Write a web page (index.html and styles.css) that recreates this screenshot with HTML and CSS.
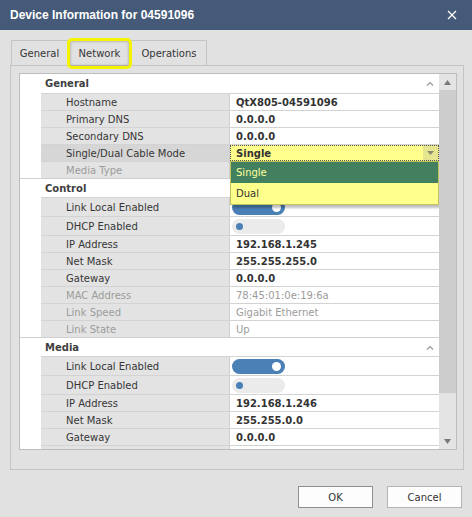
FILE: index.html
```html
<!DOCTYPE html>
<html lang="en">
<head>
  <meta charset="UTF-8">
  <title>Device Information for 04591096</title>
  <link rel="stylesheet" href="styles.css">
</head>
<body>
  <div class="titlebar">
    <span class="title">Device Information for 04591096</span>
    <svg class="close" width="10" height="10" viewBox="0 0 10 10"><path d="M1 1L9 9M9 1L1 9" stroke="#fff" stroke-width="1.3"/></svg>
  </div>

  <div class="tabs">
    <div class="tab tab-general">General</div>
    <div class="tab tab-network active">Network</div>
    <div class="tab tab-ops">Operations</div>
  </div>

  <div class="panel">
    <div class="grid">
      <div class="rows">
        <div class="group-head first">General
          <svg class="chev" width="8" height="5" viewBox="0 0 8 5"><path d="M1 4.5L4 1.5L7 4.5" fill="none" stroke="#999" stroke-width="1.2"/></svg>
        </div>
        <div class="row"><div class="label">Hostname</div><div class="value strong">QtX805-04591096</div></div>
        <div class="row"><div class="label">Primary DNS</div><div class="value strong">0.0.0.0</div></div>
        <div class="row"><div class="label">Secondary DNS</div><div class="value strong">0.0.0.0</div></div>
        <div class="row focused">
          <div class="label">Single/Dual Cable Mode</div>
          <div class="value combo">
            <span class="combo-text">Single</span>
            <span class="combo-btn"><svg width="7" height="4" viewBox="0 0 7 4"><path d="M0 0H7L3.5 4Z" fill="#8a8a70"/></svg></span>
            <div class="popup">
              <div class="item selected">Single</div>
              <div class="item">Dual</div>
            </div>
          </div>
        </div>
        <div class="row disabled"><div class="label">Media Type</div><div class="value"></div></div>

        <div class="group-head">Control</div>
        <div class="row tall"><div class="label">Link Local Enabled</div><div class="value"><span class="toggle on"></span></div></div>
        <div class="row tall"><div class="label">DHCP Enabled</div><div class="value"><span class="toggle"></span></div></div>
        <div class="row"><div class="label">IP Address</div><div class="value strong">192.168.1.245</div></div>
        <div class="row"><div class="label">Net Mask</div><div class="value strong">255.255.255.0</div></div>
        <div class="row"><div class="label">Gateway</div><div class="value strong">0.0.0.0</div></div>
        <div class="row disabled"><div class="label">MAC Address</div><div class="value">78:45:01:0e:19:6a</div></div>
        <div class="row disabled"><div class="label">Link Speed</div><div class="value">Gigabit Ethernet</div></div>
        <div class="row disabled"><div class="label">Link State</div><div class="value">Up</div></div>

        <div class="group-head">Media
          <svg class="chev" width="8" height="5" viewBox="0 0 8 5"><path d="M1 4.5L4 1.5L7 4.5" fill="none" stroke="#999" stroke-width="1.2"/></svg>
        </div>
        <div class="row tall"><div class="label">Link Local Enabled</div><div class="value"><span class="toggle on"></span></div></div>
        <div class="row tall"><div class="label">DHCP Enabled</div><div class="value"><span class="toggle"></span></div></div>
        <div class="row"><div class="label">IP Address</div><div class="value strong">192.168.1.246</div></div>
        <div class="row"><div class="label">Net Mask</div><div class="value strong">255.255.0.0</div></div>
        <div class="row"><div class="label">Gateway</div><div class="value strong">0.0.0.0</div></div>
        <div class="row"><div class="label"></div><div class="value"></div></div>
      </div>
      <div class="scrollbar">
        <div class="sb-btn"><svg width="7" height="5" viewBox="0 0 7 5"><path d="M0 5H7L3.5 0Z" fill="#7a7a7a"/></svg></div>
        <div class="sb-thumb"></div>
        <div class="sb-track"></div>
        <div class="sb-btn"><svg width="7" height="5" viewBox="0 0 7 5"><path d="M0 0H7L3.5 5Z" fill="#7a7a7a"/></svg></div>
      </div>
    </div>
  </div>

  <div class="footer">
    <button class="btn default">OK</button>
    <button class="btn">Cancel</button>
  </div>
</body>
</html>
```

FILE: styles.css
```css
body {
  margin: 0;
  width: 472px;
  height: 517px;
  overflow: hidden;
  background-color: #e1e1e1;
  font-family: "DejaVu Sans", Tahoma, sans-serif;
  font-size: 10px;
  color: #363636;
}
.titlebar {
  height: 30px;
  background-color: #445a78;
  display: flex;
  align-items: center;
  justify-content: space-between;
  padding: 0 15px 0 10px;
  box-sizing: border-box;
}
.title {
  font-family: "Liberation Sans", Arial, sans-serif;
  font-weight: bold;
  font-size: 12px;
  color: #fff;
}
.tabs {
  display: flex;
  margin-top: 10px;
  padding-left: 11px;
}
.tab {
  height: 25px;
  box-sizing: border-box;
  border: 1px solid #c4c4c4;
  border-bottom: none;
  display: flex;
  align-items: center;
  justify-content: center;
  color: #363636;
  font-size: 10px;
}
.tab-general { width: 57px; }
.tab-network { width: 65px; margin-left: -1px; }
.tab-ops { width: 76px; margin-left: -1px; }
.tab.active {
  position: relative;
}
.tab.active::after {
  content: "";
  position: absolute;
  top: -3px;
  left: -1px;
  right: -1px;
  bottom: -4px;
  border: 3px solid #f4f400;
  border-radius: 5px;
  box-shadow: inset 0 0 3px rgba(0, 0, 0, 0.35);
}
.panel {
  margin-left: 10px;
  width: 454px;
  height: 405px;
  box-sizing: border-box;
  border: 1px solid #c4c4c4;
  padding: 7px 6px 19px 8px;
}
.grid {
  height: 377px;
  box-sizing: border-box;
  border: 1px solid #bdbdbd;
  display: flex;
  background-color: #fff;
}
.rows {
  flex: 1;
  overflow: hidden;
  position: relative;
}
.group-head {
  height: 19px;
  box-sizing: border-box;
  border-top: 1px solid #d0d0d0;
  display: flex;
  align-items: center;
  justify-content: space-between;
  padding: 0 5px 0 25px;
  font-weight: bold;
  color: #404040;
}
.group-head.first {
  border-top: none;
}
.row {
  height: 17px;
  margin-left: 21px;
  display: flex;
  box-sizing: border-box;
  border-top: 1px solid #d3d3d3;
}
.row.tall {
  height: 19px;
}
.label {
  width: 189px;
  box-sizing: border-box;
  background-color: #e3e3e3;
  border-right: 1px solid #cfcfcf;
  padding-left: 25px;
  display: flex;
  align-items: center;
}
.value {
  flex: 1;
  padding-left: 6px;
  display: flex;
  align-items: center;
  color: #333;
}
.value.strong {
  font-weight: bold;
}
.row.disabled .label,
.row.disabled .value {
  color: #9c9c9c;
}
.row.focused .label {
  background-color: #d6d6d6;
}
.combo {
  position: relative;
  background-color: #ffff8c;
  outline: 1px dotted #555;
  outline-offset: -1px;
  padding-right: 1px;
  justify-content: space-between;
}
.combo-text {
  font-weight: bold;
}
.combo-btn {
  width: 15px;
  height: 100%;
  background-color: #e6e690;
  display: flex;
  align-items: center;
  justify-content: center;
}
.popup {
  position: absolute;
  top: 16px;
  left: 0;
  width: 209px;
  box-sizing: border-box;
  border: 1px solid #c2c25a;
  background-color: #ffff8c;
  box-shadow: 3px 3px 2px rgba(0, 0, 0, 0.25);
  z-index: 2;
}
.item {
  height: 21px;
  padding-left: 5px;
  display: flex;
  align-items: center;
  color: #333;
  font-size: 10px;
}
.item.selected {
  background-color: #42805f;
  color: #ffff9a;
}
.toggle {
  width: 53px;
  height: 15px;
  border-radius: 8px;
  background-color: #ebebeb;
  margin-left: -4px;
  position: relative;
}
.toggle::after {
  content: "";
  position: absolute;
  top: 4px;
  left: 4px;
  width: 7px;
  height: 7px;
  border-radius: 50%;
  background-color: #4a80b6;
}
.toggle.on {
  background-color: #4a80b6;
}
.toggle.on::after {
  top: 3px;
  left: auto;
  right: 4px;
  width: 9px;
  height: 9px;
  background-color: #fff;
}
.scrollbar {
  width: 17px;
  background-color: #e4e4e4;
  display: flex;
  flex-direction: column;
}
.sb-btn {
  height: 16px;
  display: flex;
  align-items: center;
  justify-content: center;
}
.sb-thumb {
  height: 303px;
  background-color: #cdcdcd;
}
.sb-track {
  flex: 1;
}
.footer {
  display: flex;
  justify-content: flex-end;
  gap: 14px;
  margin-top: 16px;
  padding-right: 10px;
}
.btn {
  width: 75px;
  height: 22px;
  border: 1px solid #b4b4b4;
  background-color: #fdfdfd;
  font-family: "DejaVu Sans", Tahoma, sans-serif;
  font-size: 10px;
  color: #333;
  padding: 0;
}
.btn.default {
  border-color: #8f8f8f;
}
```
